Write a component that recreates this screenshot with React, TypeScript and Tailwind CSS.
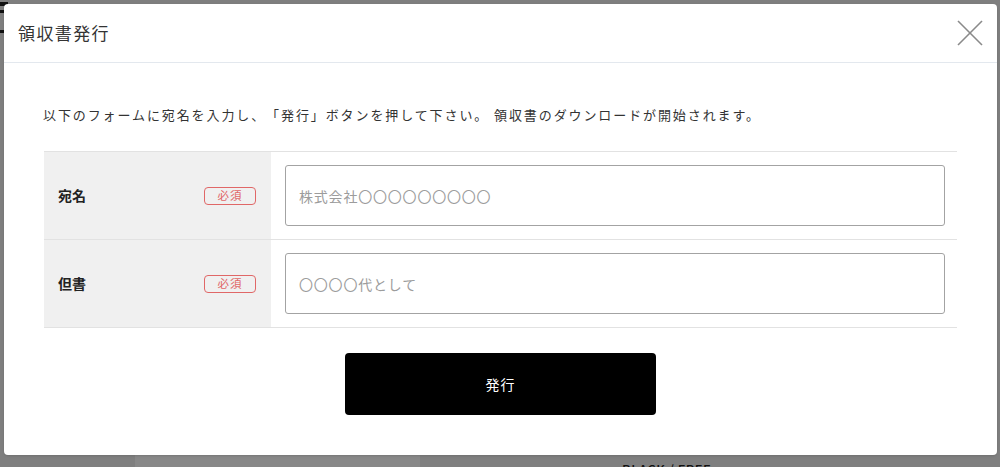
import React from 'react';

// 必須バッジ
const RequiredBadge = () => (
  <span className="flex h-[18px] w-[52px] items-center justify-center rounded-[4px] border border-[#e06767] text-[11.5px] tracking-[1px] text-[#e06767]">
    必須
  </span>
);

interface FieldRowProps {
  label: string;
  placeholder: string;
}

const FieldRow = ({ label, placeholder }: FieldRowProps) => (
  <div className="flex border-b border-[#e2e2e2]">
    <div className="flex w-[227px] shrink-0 items-center justify-between bg-[#f0f0f0] pl-[14px] pr-[15px]">
      <span className="text-[14px] font-bold text-[#222]">{label}</span>
      <RequiredBadge />
    </div>
    <div className="flex-1 pl-[14px] pr-[12px] py-[13px]">
      <input
        type="text"
        placeholder={placeholder}
        className="h-[61px] w-full rounded-[3px] border border-[#a3a3a3] px-[13px] text-[14px] tracking-[0.8px] text-[#333] placeholder:text-[#9c9c9c] focus:outline-none"
      />
    </div>
  </div>
);

export default function App() {
  return (
    <div
      className="relative h-[467px] w-[1000px] overflow-hidden bg-[#7f7f7f]"
      style={{ fontFamily: '"Noto Sans CJK JP", "Noto Sans", sans-serif' }}
    >
      {/* 背後のページ（オーバーレイ越し） */}
      <div className="absolute bottom-0 left-[135px] h-[14px] w-[285px] bg-[#888]" />
      <div className="absolute left-0 top-[2px] h-[4px] w-[8px] bg-[#111]" />
      <div className="absolute left-0 top-[10px] h-[3px] w-[6px] bg-[#111]" />
      <div className="absolute left-0 top-[30px] h-[3px] w-[5px] bg-[#111]" />
      <span className="absolute left-[622px] top-[460px] text-[13px] font-medium tracking-[0.5px] text-[#111]">
        BLACK / FREE
      </span>

      {/* モーダル */}
      <div className="absolute left-[4px] top-[4px] flex h-[451px] w-[993px] flex-col rounded-[4px] bg-white shadow-sm">
        <div className="flex h-[59px] items-center justify-between border-b border-[#e3e8ee] pl-[14px] pr-[14px]">
          <h2 className="text-[17px] tracking-[1.4px] text-[#333]">領収書発行</h2>
          <button aria-label="閉じる" className="flex h-[26px] w-[26px] items-center justify-center">
            <svg width="26" height="26" viewBox="0 0 26 26" fill="none" stroke="#8a8a8a" strokeWidth="1.6">
              <line x1="1" y1="1" x2="25" y2="25" />
              <line x1="25" y1="1" x2="1" y2="25" />
            </svg>
          </button>
        </div>

        <div className="flex flex-col px-[40px] pt-[42px]">
          <p className="-ml-[1px] h-[20px] whitespace-nowrap text-[13px] leading-[20px] tracking-[1.9px] text-[#333] [text-spacing-trim:space-all]">
            以下のフォームに宛名を入力し、「発行」ボタンを押して下さい。 領収書のダウンロードが開始されます。
          </p>

          <div className="mt-[26px] border-t border-[#e2e2e2]">
            <FieldRow label="宛名" placeholder="株式会社〇〇〇〇〇〇〇〇〇" />
            <FieldRow label="但書" placeholder="〇〇〇〇代として" />
          </div>

          <div className="mt-[25px] flex justify-center">
            <button className="h-[62px] w-[311px] rounded-[4px] bg-black text-[14px] tracking-[1px] text-white">
              発行
            </button>
          </div>
        </div>
      </div>
    </div>
  );
}
